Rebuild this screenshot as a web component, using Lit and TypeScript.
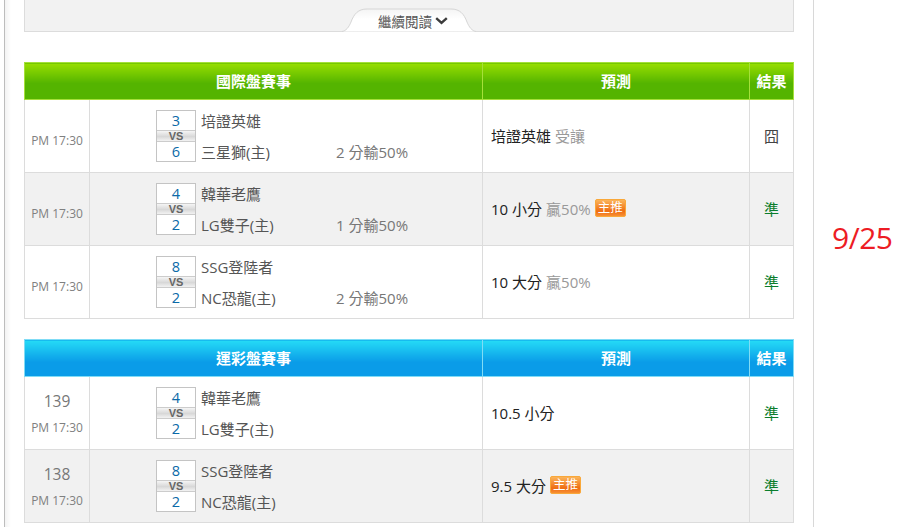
import { LitElement, html, css } from "lit";
import { customElement } from "lit/decorators.js";

type Row = { no?: string; a: [string, string]; s: [string, string]; line?: string; pick: string; odds?: string; main?: boolean; res: string; win: boolean };

const intl: Row[] = [
  { a: ["培證英雄", "三星獅(主)"], s: ["3", "6"], line: "2 分輸50%", pick: "培證英雄", odds: "受讓", res: "囧", win: false },
  { a: ["韓華老鷹", "LG雙子(主)"], s: ["4", "2"], line: "1 分輸50%", pick: "10 小分", odds: "贏50%", main: true, res: "準", win: true },
  { a: ["SSG登陸者", "NC恐龍(主)"], s: ["8", "2"], line: "2 分輸50%", pick: "10 大分", odds: "贏50%", res: "準", win: true },
];
const lottery: Row[] = [
  { no: "139", a: ["韓華老鷹", "LG雙子(主)"], s: ["4", "2"], pick: "10.5 小分", res: "準", win: true },
  { no: "138", a: ["SSG登陸者", "NC恐龍(主)"], s: ["8", "2"], pick: "9.5 大分", main: true, res: "準", win: true },
];

@customElement("app-root")
export class AppRoot extends LitElement {
  static styles = css`
    :host {
      display: flex;
      height: 527px;
      overflow: hidden;
      background: #fff;
      font-family: "Open Sans", "Noto Sans CJK TC", sans-serif;
      font-size: 15px;
      color: #555;
    }
    .main {
      box-sizing: border-box;
      width: 810px;
      margin-left: 4px;
      padding: 0 19px 0 19px;
      border-left: 1px solid #bdbdbd;
      border-right: 1px solid #d8d8d8;
      background: linear-gradient(90deg, #f3f3f3 0, #fff 6px);
      display: flex;
      flex-direction: column;
      gap: 20px;
    }
    .panel {
      box-sizing: border-box;
      width: 770px;
      height: 32px;
      margin-bottom: 10px;
      background: #f2f2f2;
      border: 1px solid #dcdcdc;
      border-top: 0;
      display: flex;
      justify-content: center;
      align-items: flex-end;
    }
    .tab {
      box-sizing: border-box;
      position: relative;
      width: 134px;
      height: 24px;
      margin-bottom: -1px;
      padding: 2px 0 0 8px;
      display: flex;
      justify-content: center;
      align-items: center;
      gap: 3px;
      font-size: 13.5px;
      color: #555;
    }
    .tab .shape { position: absolute; inset: 0; }
    .tab span, .tab .chev { position: relative; }
    table {
      width: 769px;
      table-layout: fixed;
      border-collapse: collapse;
    }
    th {
      height: 37px;
      padding: 0 0 2px;
      box-sizing: border-box;
      color: #fff;
      font-size: 15px;
      font-weight: 700;
    }
    .green th {
      background: linear-gradient(#98de00 0, #54b400 55%);
      border: 1px solid #a6e03a;
    }
    .blue th {
      background: linear-gradient(#25dbf6 0, #0a9ce8 60%);
      border: 1px solid #80dcf6;
    }
    td {
      height: 73px;
      padding: 0;
      box-sizing: border-box;
      border: 1px solid #dcdcdc;
    }
    tbody tr:nth-child(even) td { background: #f1f1f1; }
    .time { text-align: center; color: #808080; font-size: 12px; padding-top: 8px; }
    .time.numbered { padding-top: 0; }
    .no { font-size: 15.5px; color: #777; margin-bottom: 8px; line-height: 20px; }
    .match { display: flex; align-items: center; padding-left: 66px; }
    .score {
      box-sizing: border-box;
      width: 40px;
      height: 52px;
      border: 1px solid #c4c4c4;
      background: #fff;
      display: grid;
      grid-template-rows: 19px 12px 19px;
      text-align: center;
      color: #0b6aa8;
      font-size: 14.5px;
      line-height: 19px;
    }
    .vs {
      font-family: "Liberation Sans", sans-serif;
      font-size: 11px;
      font-weight: 700;
      line-height: 10px;
      color: #666;
      border: 1px solid #cccccc;
      border-width: 1px 0;
      background: linear-gradient(#f5f5f5, #d8d8d8 55%, #f2f2f2);
    }
    .teams {
      display: grid;
      grid-template-rows: 1fr 1fr;
      height: 62px;
      width: 134px;
      margin-left: 5px;
      align-items: center;
      font-size: 15px;
      color: #555;
      white-space: nowrap;
    }
    .line { margin-left: 1px; color: #777; font-size: 15px; padding-top: 31px; line-height: 22px; white-space: nowrap; }
    .pick { padding: 0 0 2px 8px; white-space: nowrap; color: #222; font-size: 15px; }
    .pick-in { display: flex; align-items: center; gap: 4px; }
    .odds { color: #999; }
    .badge {
      box-sizing: border-box;
      display: inline-block;
      height: 18px;
      width: 31px;
      margin: -1px 0 0 0;
      border: 1px solid #f9a83a;
      border-radius: 2px;
      background: linear-gradient(#fbb45a, #ef6d12 70%, #f78f34);
      color: #fff;
      font-size: 12.5px;
      line-height: 15px;
      text-align: center;
    }
    .res { text-align: center; color: #444; font-size: 15px; padding-bottom: 2px; }
    .res.win { color: #0a7d2c; }
    .side {
      flex: 1;
      padding: 216px 0 0 18px;
      color: #ed1c24;
      font-size: 30px;
      letter-spacing: -0.5px;
      line-height: 44px;
      font-family: "Open Sans", sans-serif;
    }
  `;

  private table(title: string, cls: string, rows: Row[]) {
    return html`<table class=${cls}>
      <colgroup><col style="width:65px" /><col style="width:393px" /><col style="width:267px" /><col style="width:44px" /></colgroup>
      <thead><tr><th colspan="2">${title}</th><th>預測</th><th>結果</th></tr></thead>
      <tbody>
        ${rows.map(
          (r) => html`<tr>
            <td class="time ${r.no ? "numbered" : ""}">${r.no ? html`<div class="no">${r.no}</div>` : ""}PM 17:30</td>
            <td>
              <div class="match">
                <div class="score"><div>${r.s[0]}</div><div class="vs">VS</div><div>${r.s[1]}</div></div>
                <div class="teams"><div>${r.a[0]}</div><div>${r.a[1]}</div></div>
                ${r.line ? html`<div class="line">${r.line}</div>` : ""}
              </div>
            </td>
            <td class="pick">
              <div class="pick-in">
                <span>${r.pick}</span>
                ${r.odds ? html`<span class="odds">${r.odds}</span>` : ""}
                ${r.main ? html`<span class="badge">主推</span>` : ""}
              </div>
            </td>
            <td class="res ${r.win ? "win" : ""}">${r.res}</td>
          </tr>`
        )}
      </tbody>
    </table>`;
  }

  render() {
    return html`
      <div class="main">
        <div class="panel">
          <div class="tab">
            <svg class="shape" width="134" height="24" viewBox="0 0 134 24">
              <defs><linearGradient id="t" x1="0" y1="0" x2="0" y2="1"><stop offset="0" stop-color="#f4f4f4" /><stop offset="0.45" stop-color="#fff" /></linearGradient></defs>
              <path d="M0 23.5C4 23 7 19 9 14C12 6 16 1 25 1H109C118 1 122 6 125 14C127 19 130 23 134 23.5Z" fill="url(#t)" />
              <path d="M0 23.5C4 23 7 19 9 14C12 6 16 1 25 1H109C118 1 122 6 125 14C127 19 130 23 134 23.5" fill="none" stroke="#d6d6d6" />
            </svg>
            <span>繼續閱讀</span>
            <svg class="chev" width="13" height="8" viewBox="0 0 13 8"><path d="M1.2 1.2L6.5 6L11.8 1.2" fill="none" stroke="#3c3c3c" stroke-width="2.4" /></svg>
          </div>
        </div>
        ${this.table("國際盤賽事", "green", intl)}
        ${this.table("運彩盤賽事", "blue", lottery)}
      </div>
      <div class="side">9/25</div>
    `;
  }
}
